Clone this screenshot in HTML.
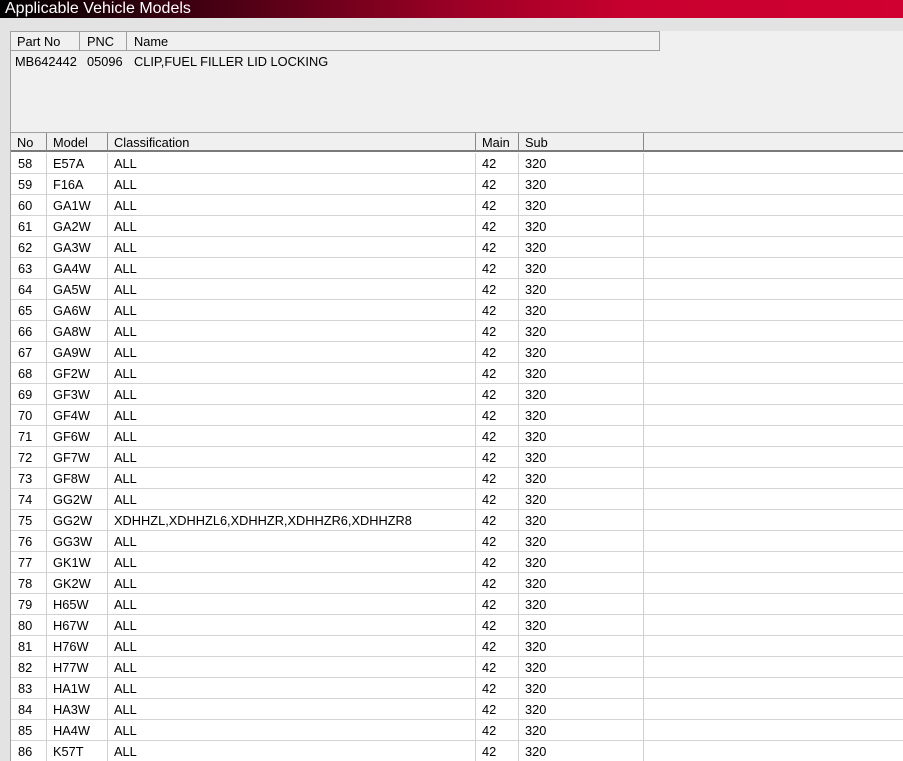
<!DOCTYPE html>
<html><head><style>
*{margin:0;padding:0;box-sizing:border-box}
html,body{width:903px;height:761px;overflow:hidden}
body{background:#e3e3e3;font-family:"Liberation Sans",sans-serif;font-size:12.8px;color:#000;position:relative}
.title{position:absolute;left:0;top:0;width:903px;height:18px;background:linear-gradient(90deg,#000 0%,#3a0010 20%,#9a0025 50%,#c8002f 70%,#d00030 100%);color:#fff;font-size:16px;line-height:17px;padding-left:5px}
.panel{position:absolute;left:10px;top:31px;width:893px;height:101px;background:#f0f0f0;border-left:1px solid #a0a0a0}
.abs{position:absolute;white-space:nowrap}
.vl{position:absolute;width:1px;background:#a0a0a0}
.hl{position:absolute;height:1px}
.tbl{position:absolute;left:10px;top:132px;width:893px;height:629px;background:#fff;border-left:1px solid #a0a0a0;overflow:hidden}
.hdr{position:absolute;left:0;top:0;width:893px;height:20px;background:#f0f0f0;border-top:1px solid #a0a0a0;border-bottom:2px solid #7a7a7a}
</style></head><body>
<div class="title">Applicable Vehicle Models</div>
<div class="panel">
<div class="hl" style="left:0;top:0;width:649px;background:#a0a0a0"></div>
<div class="hl" style="left:0;top:19px;width:649px;background:#a0a0a0"></div>
<div class="vl" style="left:68px;top:0;height:19px"></div>
<div class="vl" style="left:115px;top:0;height:19px"></div>
<div class="vl" style="left:648px;top:0;height:20px"></div>
<div class="abs" style="left:6px;top:3px">Part No</div>
<div class="abs" style="left:76px;top:3px">PNC</div>
<div class="abs" style="left:123px;top:3px">Name</div>
<div class="abs" style="left:4px;top:23px">MB642442</div>
<div class="abs" style="left:76px;top:23px">05096</div>
<div class="abs" style="left:123px;top:23px">CLIP,FUEL FILLER LID LOCKING</div>
</div>
<div class="tbl">
<div class="hdr">
<div class="vl" style="left:35px;top:0;height:18px;background:#888"></div>
<div class="vl" style="left:96px;top:0;height:18px;background:#888"></div>
<div class="vl" style="left:464px;top:0;height:18px;background:#888"></div>
<div class="vl" style="left:507px;top:0;height:18px;background:#888"></div>
<div class="vl" style="left:632px;top:0;height:18px;background:#888"></div>
<div class="abs" style="left:6px;top:2px">No</div>
<div class="abs" style="left:42px;top:2px">Model</div>
<div class="abs" style="left:103px;top:2px">Classification</div>
<div class="abs" style="left:471px;top:2px">Main</div>
<div class="abs" style="left:514px;top:2px">Sub</div>
</div>
<div id="rows"></div>
</div>
<script>
var d=[["58","E57A"],["59","F16A"],["60","GA1W"],["61","GA2W"],["62","GA3W"],["63","GA4W"],["64","GA5W"],["65","GA6W"],["66","GA8W"],["67","GA9W"],["68","GF2W"],["69","GF3W"],["70","GF4W"],["71","GF6W"],["72","GF7W"],["73","GF8W"],["74","GG2W"],["75","GG2W","XDHHZL,XDHHZL6,XDHHZR,XDHHZR6,XDHHZR8"],["76","GG3W"],["77","GK1W"],["78","GK2W"],["79","H65W"],["80","H67W"],["81","H76W"],["82","H77W"],["83","HA1W"],["84","HA3W"],["85","HA4W"],["86","K57T"]];
var h="";
d.forEach(function(r,i){var t=21+i*21;
h+='<div class="hl" style="left:0;top:'+(t+20)+'px;width:893px;background:#d4d4d4"></div>';
h+='<div class="abs" style="left:7px;top:'+(t+3)+'px">'+r[0]+'</div><div class="abs" style="left:42px;top:'+(t+3)+'px">'+r[1]+'</div><div class="abs" style="left:103px;top:'+(t+3)+'px">'+(r[2]||"ALL")+'</div><div class="abs" style="left:471px;top:'+(t+3)+'px">42</div><div class="abs" style="left:514px;top:'+(t+3)+'px">320</div>';});
[35,96,464,507,632].forEach(function(x){h+='<div class="vl" style="left:'+x+'px;top:21px;height:620px;background:#d0d0d0"></div>';});
document.getElementById("rows").innerHTML=h;
</script>
</body></html>
